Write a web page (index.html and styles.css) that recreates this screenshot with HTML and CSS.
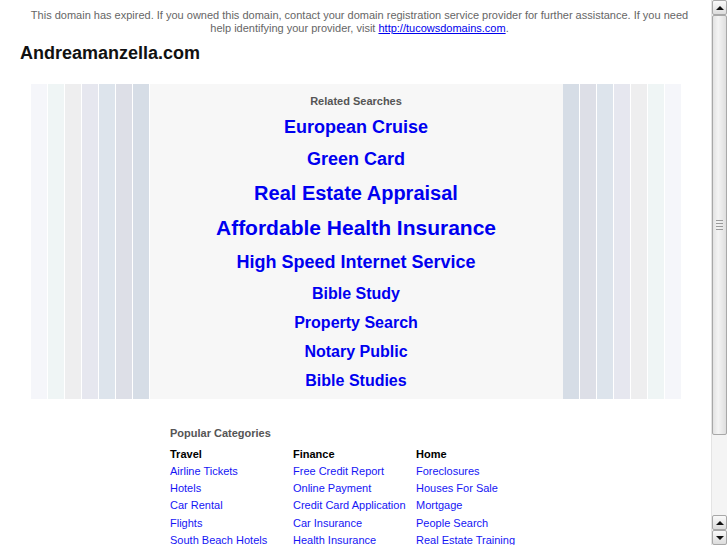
FILE: index.html
```html
<!DOCTYPE html>
<html>
<head>
<meta charset="utf-8">
<title>Andreamanzella.com</title>
<link rel="stylesheet" href="styles.css">
</head>
<body>
<div class="page">
  <p class="notice">This domain has expired. If you owned this domain, contact your domain registration service provider for further assistance. If you need help identifying your provider, visit <a href="#">http://tucowsdomains.com</a>.</p>
  <div class="main">
    <h1 class="title">Andreamanzella.com</h1>
    <div class="band">
      <div class="stripes left">
        <span class="st c1"></span><span class="st c2"></span><span class="st c3"></span><span class="st c4"></span><span class="st c5"></span><span class="st c6"></span><span class="st c7"></span>
      </div>
      <div class="center">
        <div class="rs-title">Related Searches</div>
        <a class="kw s18 firstkw" href="#">European Cruise</a>
        <a class="kw s18" href="#">Green Card</a>
        <a class="kw s20 wide" href="#">Real Estate Appraisal</a>
        <a class="kw s21" href="#">Affordable Health Insurance</a>
        <a class="kw s18" href="#">High Speed Internet Service</a>
        <a class="kw s16 first16" href="#">Bible Study</a>
        <a class="kw s16" href="#">Property Search</a>
        <a class="kw s16" href="#">Notary Public</a>
        <a class="kw s16" href="#">Bible Studies</a>
      </div>
      <div class="stripes right">
        <span class="st c7"></span><span class="st c6"></span><span class="st c5"></span><span class="st c4"></span><span class="st c3"></span><span class="st c2"></span><span class="st c1"></span>
      </div>
    </div>
    <div class="cats">
      <div class="cats-title">Popular Categories</div>
      <div class="cols">
        <div class="col">
          <div class="col-head">Travel</div>
          <a href="#">Airline Tickets</a>
          <a href="#">Hotels</a>
          <a href="#">Car Rental</a>
          <a href="#">Flights</a>
          <a href="#">South Beach Hotels</a>
        </div>
        <div class="col">
          <div class="col-head">Finance</div>
          <a href="#">Free Credit Report</a>
          <a href="#">Online Payment</a>
          <a href="#">Credit Card Application</a>
          <a href="#">Car Insurance</a>
          <a href="#">Health Insurance</a>
        </div>
        <div class="col">
          <div class="col-head">Home</div>
          <a href="#">Foreclosures</a>
          <a href="#">Houses For Sale</a>
          <a href="#">Mortgage</a>
          <a href="#">People Search</a>
          <a href="#">Real Estate Training</a>
        </div>
      </div>
    </div>
  </div>
</div>
<div class="scrollbar">
  <div class="sb-btn"><span class="arrow up"></span></div>
  <div class="sb-thumb"><span class="grip"></span></div>
  <div class="sb-track"></div>
  <div class="sb-btn"><span class="arrow up"></span></div>
  <div class="sb-btn"><span class="arrow down"></span></div>
</div>
</body>
</html>
```
FILE: styles.css
```css
html, body {
  margin: 0;
  padding: 0;
  overflow: hidden;
  background: #fff;
}
body {
  font-family: "Liberation Sans", Arial, sans-serif;
  width: 711px;
  height: 545px;
}
.page {
  width: 711px;
}
.notice {
  margin: 9px 0 0 8px;
  padding: 0 17px;
  font-size: 11px;
  line-height: 13px;
  color: #666;
  text-align: center;
}
.notice a {
  color: #0000ee;
  text-decoration: underline;
}
.main {
  margin: 0 8px;
}
.title {
  margin: 8px 0 0 0;
  padding-left: 12px;
  font-size: 18px;
  line-height: 21px;
  font-weight: bold;
  color: #111;
}
.band {
  width: 650px;
  margin: 20px auto 0;
  display: flex;
  height: 315px;
}
.stripes {
  display: flex;
}
.st {
  width: 16px;
}
.left .st { margin-right: 1px; }
.right .st { margin-left: 1px; }
.right { margin-left: -1px; }
.c1 { background: #f5f6fa; }
.c2 { background: #eff5f5; }
.c3 { background: #eeeeef; }
.c4 { background: #e6e7ef; }
.c5 { background: #dde4ec; }
.c6 { background: #dddfe7; }
.c7 { background: #d6dde6; }
.center {
  flex: 1;
  background: #f7f7f7;
  display: flex;
  flex-direction: column;
  align-items: center;
  padding-top: 11px;
}
.rs-title {
  font-size: 11px;
  line-height: 13px;
  font-weight: bold;
  color: #555;
}
.kw {
  display: block;
  color: #0000f0;
  text-decoration: none;
  font-weight: bold;
  margin-top: 10px;
}
.s16 { font-size: 16px; line-height: 19px; }
.s18 { font-size: 18px; line-height: 22px; }
.s20 { font-size: 20px; line-height: 24px; }
.s21 { font-size: 21px; line-height: 26px; }
.firstkw { margin-top: 8px; }
.wide { margin-top: 11px; }
.first16 { margin-top: 11px; }
.cats {
  width: 371px;
  margin: 27px auto 0;
  font-size: 11px;
}
.cats-title {
  font-weight: bold;
  color: #555;
  line-height: 14px;
}
.cols {
  display: flex;
  margin-top: 7px;
}
.col {
  width: 123px;
  display: flex;
  flex-direction: column;
}
.col-head {
  font-weight: bold;
  color: #000;
  line-height: 15.5px;
}
.col a {
  color: #1515f5;
  text-decoration: none;
  line-height: 17.35px;
  white-space: nowrap;
}
.scrollbar {
  position: fixed;
  top: 0;
  right: 0;
  width: 16px;
  height: 545px;
  display: flex;
  flex-direction: column;
  background: #f2f2f2;
  border-left: 1px solid #e4e4e4;
  box-sizing: border-box;
}
.sb-btn {
  height: 15px;
  box-sizing: border-box;
  border: 1px solid #a8a8a8;
  border-radius: 2px;
  background: linear-gradient(#fafafa, #dcdcdc);
  display: flex;
  align-items: center;
  justify-content: center;
  flex: none;
}
.sb-thumb {
  height: 420px;
  flex: none;
  box-sizing: border-box;
  border: 1px solid #a8a8a8;
  border-radius: 2px;
  background: linear-gradient(90deg, #e2e2e2, #f4f4f4 40%, #dedede);
  display: flex;
  align-items: center;
  justify-content: center;
}
.grip {
  width: 7px;
  height: 12px;
  background-image: radial-gradient(circle, #9a9a9a 0.6px, transparent 0.8px);
  background-size: 2px 3px;
}
.sb-track {
  flex: 1;
  background: #f4f4f4;
}
.arrow {
  width: 0;
  height: 0;
  border-left: 4px solid transparent;
  border-right: 4px solid transparent;
}
.arrow.up { border-bottom: 4px solid #111; }
.arrow.down { border-top: 4px solid #111; }
```
